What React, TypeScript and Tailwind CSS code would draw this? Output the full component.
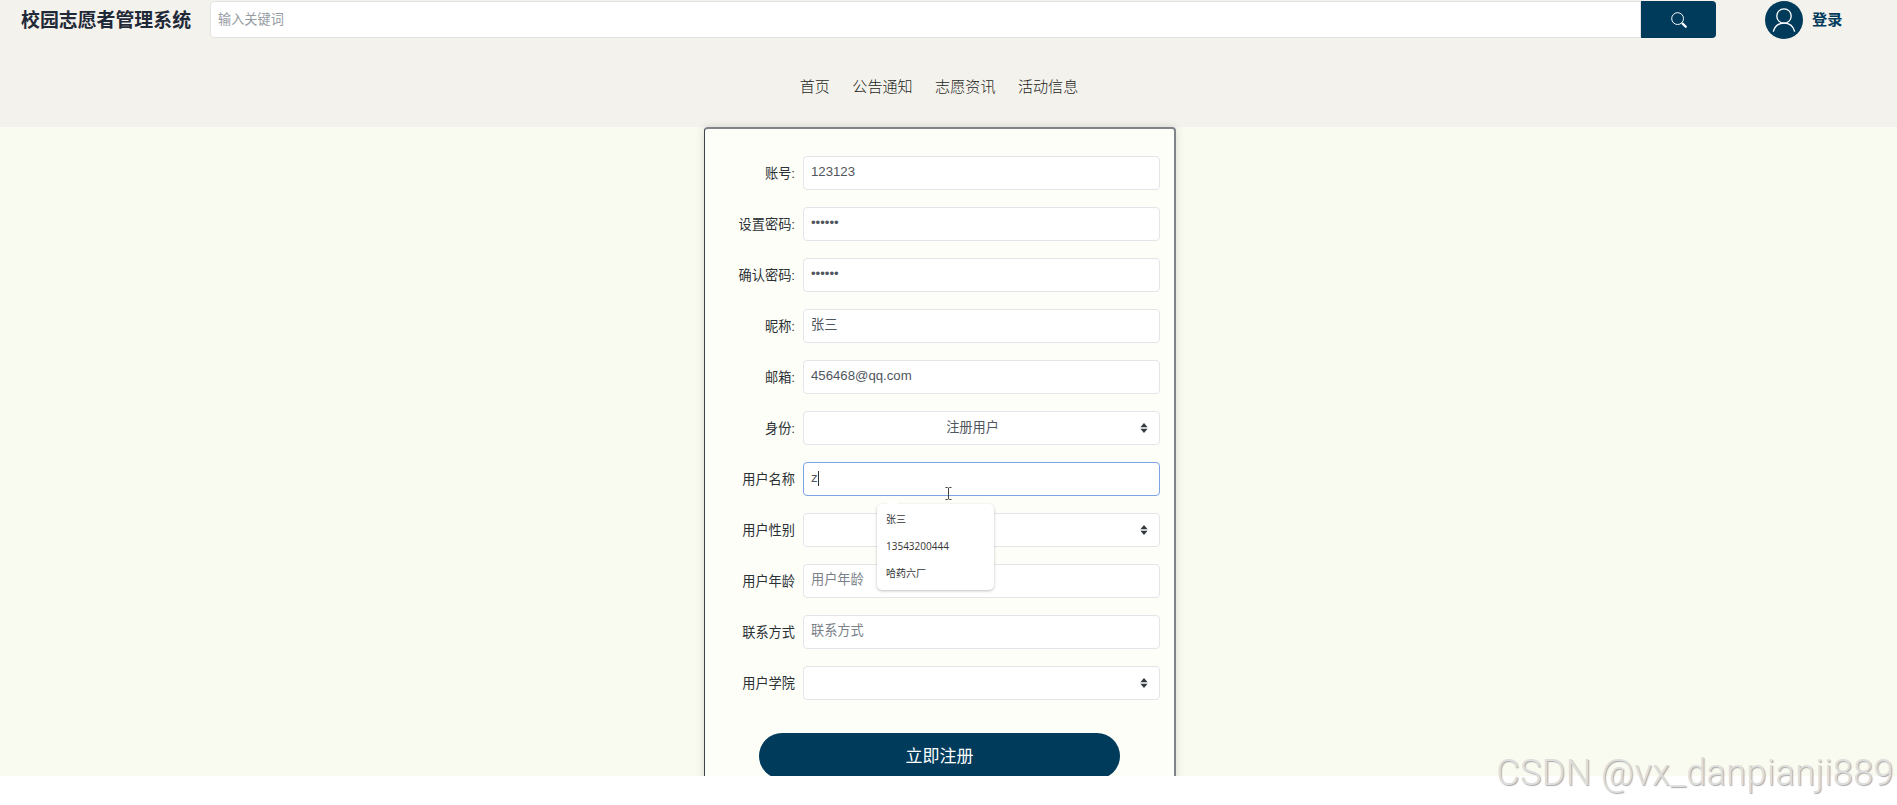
import type { ReactNode } from "react";

// ─── Data ─────────────────────────────────────────────────────────────────────

type Field = {
    label: string;
    kind: "text" | "password" | "select";
    value?: string;
    placeholder?: string;
    focused?: boolean;
};

const NAV_ITEMS = ["首页", "公告通知", "志愿资讯", "活动信息"];

const FIELDS: Field[] = [
    { label: "账号:", kind: "text", value: "123123" },
    { label: "设置密码:", kind: "password", value: "123123" },
    { label: "确认密码:", kind: "password", value: "123123" },
    { label: "昵称:", kind: "text", value: "张三" },
    { label: "邮箱:", kind: "text", value: "456468@qq.com" },
    { label: "身份:", kind: "select", value: "注册用户" },
    { label: "用户名称", kind: "text", value: "z", focused: true },
    { label: "用户性别", kind: "select" },
    { label: "用户年龄", kind: "text", placeholder: "用户年龄" },
    { label: "联系方式", kind: "text", placeholder: "联系方式" },
    { label: "用户学院", kind: "select" },
];

const SUGGESTIONS = ["张三", "13543200444", "哈药六厂"];

// ─── Icons ────────────────────────────────────────────────────────────────────

const SearchIcon = () => (
    <svg width="16" height="16" viewBox="0 0 16 16" fill="none" stroke="#fff">
        <circle cx="6.6" cy="6.6" r="5.9" strokeWidth="1" />
        <path d="M10.8 10.8l1 1" strokeWidth="1" />
        <path d="M11.6 11.6l3.2 3.2" strokeWidth="2.2" strokeLinecap="round" />
    </svg>
);

const UserIcon = () => (
    <svg width="38" height="38" viewBox="0 0 38 38" fill="none" stroke="#fff" strokeWidth="1.3" strokeLinecap="round">
        <circle cx="19" cy="15" r="7.2" />
        <path d="M8.4 30.2c1.4-4.8 5.5-8 10.6-8s9.200 3.200 10.600 8" />
    </svg>
);

const SelectArrows = () => (
    <svg width="8" height="10" viewBox="0 0 8 10" fill="#343a40" className="absolute right-[11px] top-[11px]">
        <path d="M4 0l3.600 4.200H.4z" />
        <path d="M4 10L.4 5.800h7.200z" />
    </svg>
);

const TextCursor = () => (
    <svg width="7" height="13" viewBox="0 0 7 13" fill="none" stroke="#444" strokeWidth="1" className="absolute left-[141px] top-[24px] z-20">
        <path d="M.5 .5h2l1 .7 1-.7h2M3.500 1v11M.5 12.500h2l1-.7 1 .7h2" />
    </svg>
);

// ─── Header ───────────────────────────────────────────────────────────────────

const Header = () => (
    <header className="h-[127px] bg-[#f4f2ed]">
        <div className="flex items-center pl-[21px] pt-px">
            <h1 className="w-[189px] shrink-0 text-[18.9px] leading-[37px] font-bold text-[#1f2937] whitespace-nowrap">校园志愿者管理系统</h1>
            <input
                readOnly
                placeholder="输入关键词"
                className="mb-px h-[37px] w-[1431px] rounded-l-[4px] border border-[#e3e3e3] bg-white pl-[7px] text-[13.2px] placeholder:text-[#969ba3] outline-none"
            />
            <button className="mb-px flex h-[37px] w-[75px] items-center justify-center rounded-r-[4px] bg-[#003b5c]">
                <SearchIcon />
            </button>
            <div className="ml-[49px] h-[38px] w-[38px] rounded-full bg-[#003b5c]">
                <UserIcon />
            </div>
            <span className="ml-[9px] text-[15.2px] leading-[38px] font-bold text-[#003b5c]">登录</span>
        </div>
        <nav className="flex justify-center gap-[22.4px] pt-[36px] pr-[19px] text-[15.1px] leading-6 font-light text-[#1c1f22]">
            {NAV_ITEMS.map((item) => (
                <a key={item}>{item}</a>
            ))}
        </nav>
    </header>
);

// ─── Form ─────────────────────────────────────────────────────────────────────

const SuggestionList = () => (
    <div className="absolute left-[73px] top-[41px] z-10 h-[86px] w-[117px] rounded-[5px] bg-white pt-[2px] shadow-[0_1px_3px_rgba(0,0,0,0.25)]">
        <span className="absolute -top-[4px] left-[11px] h-[9px] w-[9px] rotate-45 bg-white" />
        {SUGGESTIONS.map((text) => (
            <div key={text} className="relative h-[27px] pl-[9px] font-['Open_Sans','Noto_Sans_CJK_SC',sans-serif] text-[10px] leading-[27px] text-[#333]">
                {text}
            </div>
        ))}
    </div>
);

const FieldBox = ({ field, children }: { field: Field; children?: ReactNode }) => (
    <div
        className={`relative h-[34px] w-[357px] rounded-[4px] border bg-white text-[13.2px] leading-[30px] text-[#50565d] ${
            field.focused ? "border-[#7ba3e6]" : "border-[#e4e5e8]"
        }`}
    >
        {field.kind === "select" ? (
            <>
                <div className="pt-px pr-[18px] text-center">{field.value}</div>
                <SelectArrows />
            </>
        ) : field.focused ? (
            <div className="flex items-center pl-[7px]">
                {field.value}
                <span className="mt-px h-[15px] w-px bg-[#333]" />
            </div>
        ) : (
            <input
                readOnly
                type={field.kind}
                defaultValue={field.value}
                placeholder={field.placeholder}
                className="block h-[30px] w-full bg-transparent pl-[7px] leading-[30px] outline-none placeholder:text-[#7b8188]"
            />
        )}
        {children}
    </div>
);

const RegisterForm = () => (
    <form className="h-[700px] w-[472px] rounded-t-[4px] border border-t-2 border-r-2 border-[#80838a] border-l-[#3e444b] bg-[#fdfef8] pt-[27px] shadow-[0_0_8px_rgba(0,0,0,0.14)]">
        <div className="flex flex-col gap-[17px]">
            {FIELDS.map((field) => (
                <div key={field.label} className="flex gap-[8px]">
                    <label className="h-[34px] w-[90px] text-right text-[13.2px] leading-[36px] text-[#2b3035]">{field.label}</label>
                    <FieldBox field={field}>
                        {field.focused && (
                            <>
                                <SuggestionList />
                                <TextCursor />
                            </>
                        )}
                    </FieldBox>
                </div>
            ))}
        </div>
        <button
            type="button"
            className="mt-[33px] ml-[54px] block h-[46px] w-[361px] rounded-full bg-[#003b5c] text-[17px] leading-[48px] text-white"
        >
            立即注册
        </button>
    </form>
);

// ─── Page ─────────────────────────────────────────────────────────────────────

const App = () => (
    <div className="relative h-[805px] overflow-hidden bg-white font-['Liberation_Sans','Noto_Sans_CJK_SC',sans-serif]">
        <div className="h-[776px] overflow-hidden bg-[#f9faf0]">
            <Header />
            <main className="flex pl-[704px]">
                <RegisterForm />
            </main>
        </div>
        <div className="absolute right-[3px] bottom-[7px] font-['Roboto',sans-serif] text-[36px] leading-[50px] font-light tracking-[0.45px] whitespace-nowrap text-[#dededc] [text-shadow:1px_1px_1px_#a9a9a9]">
            CSDN @vx_danpianji889
        </div>
    </div>
);

export default App;
